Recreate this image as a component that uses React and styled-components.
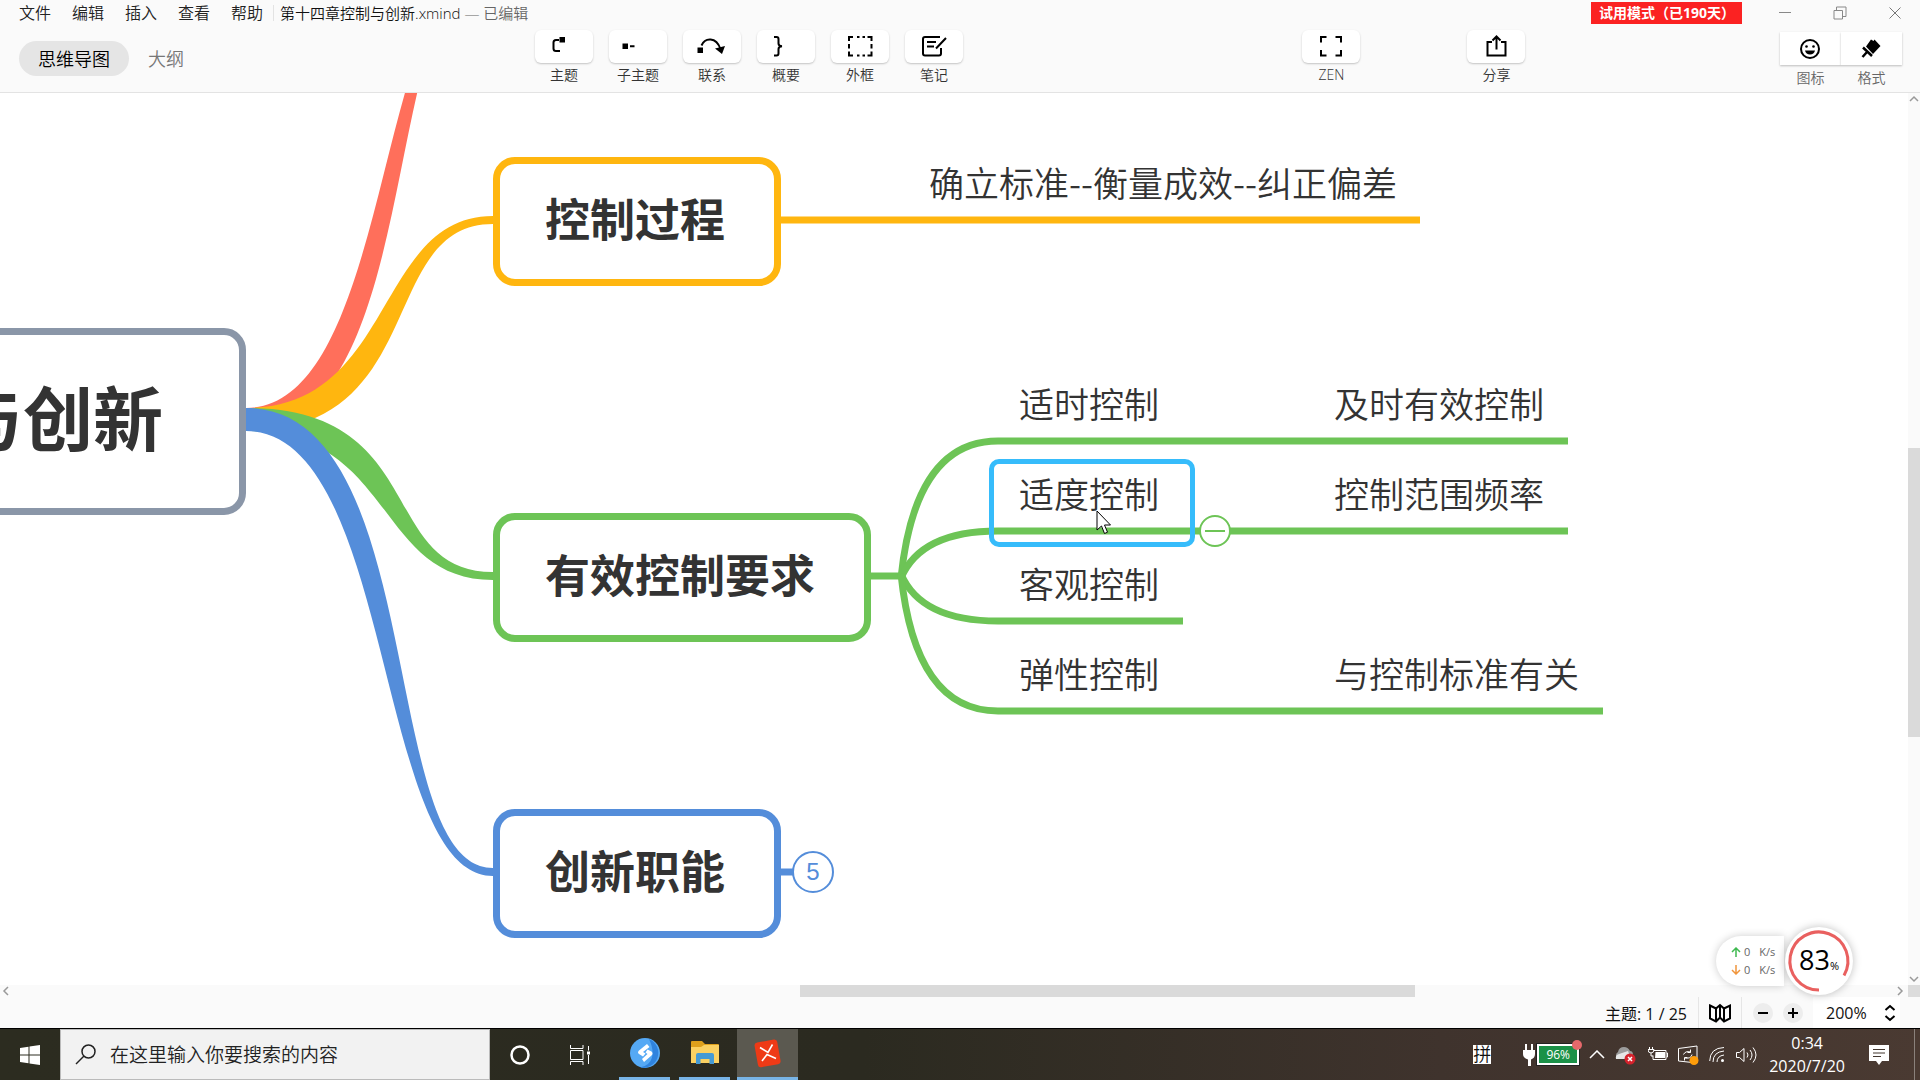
import { useState } from 'react'
import styled, { createGlobalStyle } from 'styled-components'

const GlobalStyle = createGlobalStyle`
  * {
    box-sizing: border-box;
  }

  body {
    margin: 0;
    overflow: hidden;
    color: #333;
    font-family: 'Open Sans', 'Noto Sans CJK SC', sans-serif;
    font-weight: 350;
  }

  button,
  input,
  select {
    margin: 0;
    padding: 0;
    border: 0;
    background: none;
    color: inherit;
    font: inherit;
  }

  svg {
    display: block;
  }
`

const colors = {
  red: '#ff6f5b',
  yellow: '#ffb60f',
  green: '#6dc456',
  blue: '#548dda',
  slate: '#8a96a8',
}

const menus = ['文件', '编辑', '插入', '查看', '帮助']

// TOOLBAR ICONS, DRAWN ON THE 58x33 BUTTON FACE
const icons = {
  topic: (
    <>
      <path d='M24 10h-3q-2.500 0-2.500 2.500v6q0 2.500 2.500 2.500h4' />
      <path d='M24.500 7h5.500v5.500h-5.500z' fill='#000' stroke='none' />
    </>
  ),
  subtopic: (
    <path
      d='M13.500 13.500h5.500v5.500h-5.500zM21 15.300h4.500v1.900h-4.500z'
      fill='#000'
      stroke='none'
    />
  ),
  relation: (
    <>
      <path d='M18.500 15.500C22 7.500 33 6.500 37.500 19' />
      <path
        d='M14.500 17.500h5.500v5.500h-5.500zM32 18.500l10-2.500-3 8z'
        fill='#000'
        stroke='none'
      />
    </>
  ),
  summary: (
    <path d='M17 7h2.500q2 0 2 2v4.500q0 2.500 3.500 2.700-3.500 .300-3.500 2.800v4.500q0 2-2 2H17' />
  ),
  boundary: (
    <path d='M18 11V7h4M36.500 7h4v4M40.500 21.500v4h-4M22 25.500h-4v-4M26 7h2.500M31.500 7H34M26 25.500h2.500M31.500 25.500H34M18 14v4.500M40.500 14v4.500' />
  ),
  note: (
    <>
      <path d='M35 7H20q-2 0-2 2v14.500q0 2 2 2h14q2 0 2-2V18' />
      <path d='M22 12h9M22 16.500h7M31 18.500L41 8' />
    </>
  ),
  zen: (
    <path d='M19 12.500V7h5.500M33.500 7h5.500v5.500M39 20v5.500h-5.500M24.500 25.500h-5.500V20' />
  ),
  share: (
    <>
      <path d='M25 12h-4.500v13.500h18V12H34' />
      <path d='M29.500 19.500V6.500M25.500 10.500l4-4 4 4' />
    </>
  ),
}

const tools = [
  { icon: 'topic', label: '主题' },
  { icon: 'subtopic', label: '子主题' },
  { icon: 'relation', label: '联系' },
  { icon: 'summary', label: '概要' },
  { icon: 'boundary', label: '外框' },
  { icon: 'note', label: '笔记' },
]

// MAP CONTENT, IN CANVAS COORDINATES
const topics = [
  { text: '控制过程', x: 493, y: 64, width: 288, color: colors.yellow },
  { text: '有效控制要求', x: 493, y: 420, width: 378, color: colors.green },
  { text: '创新职能', x: 493, y: 716, width: 288, color: colors.blue },
]

const leaves = [
  { text: '确立标准--衡量成效--纠正偏差', x: 929, y: 65 },
  { text: '适时控制', x: 1019, y: 286 },
  { text: '及时有效控制', x: 1334, y: 286 },
  { text: '适度控制', x: 1019, y: 376 },
  { text: '控制范围频率', x: 1334, y: 376 },
  { text: '客观控制', x: 1019, y: 466 },
  { text: '弹性控制', x: 1019, y: 556 },
  { text: '与控制标准有关', x: 1334, y: 556 },
]

// a branch starts 23 wide at the root and narrows towards its topic
const branch = (top, bottom) =>
  top < 315
    ? `M246 315C395 315 375 ${top} 493 ${top}V${bottom}C377 ${bottom} 430 338 246 338z`
    : `M246 315C430 315 377 ${top} 493 ${top}V${bottom}C375 ${bottom} 395 338 246 338z`

const Tool = ({ icon, label }) => (
  <ToolButton>
    <Face>
      <svg width='58' height='33' fill='none' stroke='#000' strokeWidth='2'>
        {icons[icon]}
      </svg>
    </Face>
    {label}
  </ToolButton>
)

const Header = () => {
  const [view, setView] = useState('map')
  return (
    <Top>
      <TitleBar>
        <Menu>
          {menus.map((name) => (
            <MenuButton key={name}>{name}</MenuButton>
          ))}
        </Menu>
        <FileName>
          第十四章控制与创新.xmind <span>— 已编辑</span>
        </FileName>
        <Trial>试用模式（已190天）</Trial>
        <WindowButtons>
          <button aria-label='最小化'>
            <svg width='14' height='14' stroke='#888'>
              <path d='M1 6.500h12' />
            </svg>
          </button>
          <button aria-label='还原'>
            <svg width='14' height='14' fill='none' stroke='#888'>
              <path d='M1 4.500h8.500v8.500H1zM3.500 4.500V1H13v9.500H9.500' />
            </svg>
          </button>
          <button aria-label='关闭'>
            <svg width='14' height='14' stroke='#777'>
              <path d='M1.500 1.500l11 11M12.500 1.500l-11 11' />
            </svg>
          </button>
        </WindowButtons>
      </TitleBar>
      <Toolbar>
        <Views>
          <ViewButton $active={view === 'map'} onClick={() => setView('map')}>
            思维导图
          </ViewButton>
          <ViewButton
            $active={view === 'outline'}
            onClick={() => setView('outline')}
          >
            大纲
          </ViewButton>
        </Views>
        <Tools>
          {tools.map((tool) => (
            <Tool key={tool.icon} {...tool} />
          ))}
        </Tools>
        <i />
        <Tool icon='zen' label='ZEN' />
        <i />
        <Tool icon='share' label='分享' />
        <i />
        <Panels>
          <PanelButton>
            <span>
              <svg width='22' height='22' fill='none' stroke='#000' strokeWidth='2'>
                <circle cx='11' cy='11' r='9' />
                <path d='M6 12.500h10q-1 4-5 4t-5-4z' fill='#000' stroke='none' />
                <circle cx='7.500' cy='8.500' r='1.300' fill='#000' stroke='none' />
                <circle cx='14.500' cy='8.500' r='1.300' fill='#000' stroke='none' />
              </svg>
            </span>
            图标
          </PanelButton>
          <PanelButton>
            <span>
              <svg width='22' height='22' stroke='#000' strokeWidth='2.500'>
                <path
                  d='M11 1.500l2.500 1.500 1-1.500 6 6.500-7.500 8L6 8.500z'
                  stroke='none'
                />
                <path d='M3 9.500l9 8.500M7 14l-4.500 5' fill='none' />
              </svg>
            </span>
            格式
          </PanelButton>
        </Panels>
      </Toolbar>
    </Top>
  )
}

const MindMap = () => (
  <Canvas>
    <Links>
      <path d={branch(-132, -125)} fill={colors.red} />
      <path d={branch(123, 131)} fill={colors.yellow} />
      <path d={branch(479, 487)} fill={colors.green} />
      <path d={branch(775, 783)} fill={colors.blue} />
      <path d='M781 127H1420' stroke={colors.yellow} strokeWidth='7' />
      <path d='M781 779h14' stroke={colors.blue} strokeWidth='7' />
      <g fill='none' stroke={colors.green} strokeWidth='7'>
        <path d='M871 483h31' />
        <path d='M901 485Q915 348 998 348H1568' />
        <path d='M901 485Q921 438 998 438H1568' />
        <path d='M901 481Q921 528 998 528H1183' />
        <path d='M901 481Q915 618 998 618H1603' />
      </g>
    </Links>
    <Root>与创新</Root>
    {topics.map((topic) => (
      <Topic
        key={topic.text}
        $x={topic.x}
        $y={topic.y}
        $width={topic.width}
        $color={topic.color}
      >
        {topic.text}
      </Topic>
    ))}
    {leaves.map((leaf) => (
      <Leaf key={leaf.text} $x={leaf.x} $y={leaf.y}>
        {leaf.text}
      </Leaf>
    ))}
    <Selection />
    <Fold aria-label='折叠' />
    <Count>5</Count>
    <Pointer width='16' height='25' fill='#fff' stroke='#000'>
      <path d='M1 1v19l4.500-4 3 7.500 3-1.300-3-7.200h6z' />
    </Pointer>
  </Canvas>
)

// floating memory and network meter
const Monitor = () => (
  <>
    <NetSpeed>
      <p>
        <svg width='10' height='10' fill='none' stroke='#3fb950' strokeWidth='1.500'>
          <path d='M5 10V1.500M1 5l4-4 4 4' />
        </svg>
        0<span>K/s</span>
      </p>
      <p>
        <svg width='10' height='10' fill='none' stroke='#f0953c' strokeWidth='1.500'>
          <path d='M5 0v8.500M1 5l4 4 4-4' />
        </svg>
        0<span>K/s</span>
      </p>
    </NetSpeed>
    <Gauge>
      <svg width='68' height='68' fill='none' stroke='#e9605f' strokeWidth='3'>
        <path d='M34 63A29 29 0 1 1 59 48.500' />
      </svg>
      83<small>%</small>
    </Gauge>
  </>
)

const Workspace = () => (
  <Work>
    <MindMap />
    <VerticalScroll>
      <svg width='12' height='12' fill='none' stroke='#999' strokeWidth='1.500'>
        <path d='M2 8l4-4 4 4' />
      </svg>
      <Thumb $before={343} $size={289} $after={236} />
      <svg width='12' height='12' fill='none' stroke='#999' strokeWidth='1.500'>
        <path d='M2 4l4 4 4-4' />
      </svg>
    </VerticalScroll>
    <HorizontalScroll>
      <svg width='12' height='12' fill='none' stroke='#999' strokeWidth='1.500'>
        <path d='M8 2L4 6l4 4' />
      </svg>
      <Thumb $before={788} $size={615} $after={481} />
      <svg width='12' height='12' fill='none' stroke='#999' strokeWidth='1.500'>
        <path d='M2 2l4 4-4 4' />
      </svg>
    </HorizontalScroll>
    <Corner />
    <Monitor />
  </Work>
)

const StatusBar = () => (
  <Status>
    <Total>主题: 1 / 25</Total>
    <MapButton aria-label='导航图'>
      <svg width='22' height='20' fill='none' stroke='#000' strokeWidth='2'>
        <path d='M1 2.500l6 3 4-3.500 4 3.500 6-3v13l-6 3-4-4-4 4-6-3zM7 5.500v13M11 2v12.500M15 5.500v13' />
      </svg>
    </MapButton>
    <Zoom>
      <button aria-label='缩小'>
        <svg width='20' height='20' stroke='#000' strokeWidth='2'>
          <path d='M5 10h10' />
        </svg>
      </button>
      <button aria-label='放大'>
        <svg width='20' height='20' stroke='#000' strokeWidth='2'>
          <path d='M5 10h10M10 5v10' />
        </svg>
      </button>
    </Zoom>
    <Scale>
      <select aria-label='缩放比例' defaultValue='200%'>
        <option>100%</option>
        <option>200%</option>
      </select>
      <svg width='12' height='18' fill='none' stroke='#000' strokeWidth='2'>
        <path d='M1.500 6L6 2l4.500 4M1.500 12L6 16l4.500-4' />
      </svg>
    </Scale>
  </Status>
)

const Taskbar = () => (
  <Bar>
    <Start aria-label='开始'>
      <svg width='20' height='20' fill='#fff'>
        <path d='M0 3l8.500-1.200V9.500H0zM9.500 1.600L20 0v9.500H9.500zM0 10.500h8.500v7.700L0 17zM9.500 10.500H20V20L9.500 18.400z' />
      </svg>
    </Start>
    <Search>
      <svg width='21' height='21' fill='none' stroke='#222' strokeWidth='1.500'>
        <circle cx='13.500' cy='7.500' r='6.500' />
        <path d='M9 12L1 20' />
      </svg>
      <input aria-label='搜索' placeholder='在这里输入你要搜索的内容' />
    </Search>
    <TaskButton aria-label='Cortana'>
      <svg width='20' height='20' fill='none' stroke='#fff' strokeWidth='2.500'>
        <circle cx='10' cy='10' r='8.500' />
      </svg>
    </TaskButton>
    <TaskButton aria-label='任务视图'>
      <svg width='20' height='20' fill='none' stroke='#fff'>
        <path d='M.500 0v3.500h12.500V0M.500 5.500h12.500v9H.500zM.500 20v-3.500h12.500V20M18.500 1v4.500M18.500 10v9' />
        <path d='M17 6.500h3v3h-3z' fill='#fff' stroke='none' />
      </svg>
    </TaskButton>
    <TaskButton $open aria-label='浏览器'>
      <svg width='30' height='30'>
        <circle cx='15' cy='15' r='15' fill='#55a9f5' />
        <path d='M19 1a15 15 0 0 1-9 28.500q10-2 12-10T19 1z' fill='#2f83de' />
        <path
          d='M17 6l-8 6.500q-2 2 0 3.500l4 2.500 2.500-3-2.500-1.500L19.500 9zM14 24l7.500-6.500q2-2 0-4l-4-2-2 3 2 1.500-5.500 5z'
          fill='#fff'
        />
      </svg>
    </TaskButton>
    <TaskButton $open aria-label='文件资源管理器'>
      <svg width='28' height='24'>
        <path d='M0 1q0-1 1-1h10l3 3h13q1 0 1 1v18H0z' fill='#dea01c' />
        <path d='M0 6h10l3-2h15v18H0z' fill='#fbd162' />
        <path d='M5 23V14q0-2 2-2h14q2 0 2 2v9h-4.500v-5h-9v5z' fill='#459ad4' />
      </svg>
    </TaskButton>
    <TaskButton $open $active aria-label='XMind'>
      <svg width='28' height='30'>
        <rect
          x='2'
          y='3'
          width='23'
          height='25'
          rx='3'
          fill='#ee3a16'
          transform='rotate(-10 13 15)'
        />
        <path
          d='M6 9.500l8 5 4.500-8M8 23l5-6.500 9 4'
          fill='none'
          stroke='#fff'
          strokeWidth='1.600'
        />
      </svg>
    </TaskButton>
    <Tray>
      <Ime>拼</Ime>
      <Battery>
        <svg width='12' height='22' fill='#fff'>
          <path d='M2 0h2v6h4V0h2v6h2v4q0 4-4 5.500V22H5v-6.500Q0 14 0 10V6h2z' />
        </svg>
        <span>96%</span>
      </Battery>
      <svg width='16' height='9' fill='none' stroke='#fff' strokeWidth='1.500'>
        <path d='M1 8l7-7 7 7' />
      </svg>
      <svg width='23' height='20'>
        <path d='M3 14a4 4 0 0 1 0-7q1-5 6-5 4 0 6 4 3 0 3 4v4z' fill='#9c9c9c' />
        <path d='M1 14q-1-4 3-5l9-3 3 8z' fill='#e6e6e6' />
        <circle cx='15' cy='14' r='5.500' fill='#d4222c' />
        <path d='M13 12l4 4M17 12l-4 4' stroke='#fff' strokeWidth='1.500' />
      </svg>
      <svg width='20' height='20' fill='none' stroke='#fff'>
        <path d='M6 5.500h12v9H5v-4M18.500 8h1v4h-1' />
        <path d='M7.500 7h9.500v6H7z' fill='#fff' stroke='none' />
        <path d='M1.500 2v2.500M4.500 2v2.500M0 4.500h6q0 3.500-3 3.500t-3-3.500M3 8v3h2' />
      </svg>
      <svg width='21' height='20' fill='none' stroke='#fff'>
        <path d='M.500 3.500L19 1v17L.500 16z' />
        <path d='M5.500 9.500q2-4 7-2.500M12.500 4.500V7.500H9.500M14 9.500q-1 4.500-7 3.500M6.500 15.500v-3h3' />
        <circle cx='16' cy='15.500' r='4.500' fill='#ff9d0a' stroke='none' />
      </svg>
      <svg width='17' height='17' fill='none' stroke='#fff'>
        <path d='M.700 15Q1 2 15 1.500M4 16Q4 6 15 5M8 16Q8 10 15 9' />
        <circle cx='13.500' cy='14.500' r='1.500' fill='#fff' stroke='none' />
      </svg>
      <svg width='21' height='18' fill='none' stroke='#fff'>
        <path d='M.500 6.500h3L8 2.500v13L3.500 11.500h-3zM11 6.500q2 2.500 0 5M14 4q4 5 0 10M17 1.500q6 7.500 0 15' />
      </svg>
      <Clock>
        0:34
        <br />
        2020/7/20
      </Clock>
      <svg width='20' height='20'>
        <path d='M0 0h20v16h-7l-3 4-3-4H0z' fill='#fff' />
        <path d='M4 4.500h12M4 8h12M4 11.500h8' stroke='#43372f' />
      </svg>
    </Tray>
  </Bar>
)

const App = () => (
  <Page>
    <GlobalStyle />
    <Header />
    <Workspace />
    <StatusBar />
    <Taskbar />
  </Page>
)

const Page = styled.div`
  display: flex;
  flex-direction: column;
  height: 100vh;
  background: #fff;
`

const Top = styled.header`
  height: 93px;
  background: #fafafa;
  border-bottom: 1px solid #e3e3e3;
`

const TitleBar = styled.div`
  display: flex;
  align-items: center;
  height: 26px;
  padding: 0 18px 0 19px;
`

const Menu = styled.nav`
  display: flex;
  gap: 21px;
  padding-right: 10px;
  border-right: 1px solid #e3e3e3;
`

const MenuButton = styled.button`
  color: #222;
  font-size: 16px;
  line-height: 16px;
`

const FileName = styled.div`
  padding-left: 6px;
  color: #111;
  font-size: 15px;
  line-height: 22px;
  span {
    color: #666;
  }
`

const Trial = styled.strong`
  margin-left: auto;
  width: 151px;
  padding-left: 8px;
  background: #fb2222;
  color: #fff;
  font-size: 14px;
  line-height: 22px;
  white-space: nowrap;
`

const WindowButtons = styled.div`
  display: flex;
  gap: 41px;
  margin-left: 36px;
`

const Toolbar = styled.div`
  display: grid;
  grid-template-columns: 516px auto 4fr auto 107px auto 3fr auto;
  padding: 4px 18px 0 19px;
`

const Views = styled.div`
  display: flex;
  align-items: flex-start;
  padding-top: 11px;
`

const ViewButton = styled.button`
  height: 35px;
  padding: 0 19px;
  border-radius: 18px;
  background: ${(props) => (props.$active ? '#e5e5e5' : 'none')};
  color: ${(props) => (props.$active ? '#000' : '#777')};
  font-size: 18px;
  line-height: 32px;
`

const Tools = styled.div`
  display: flex;
  gap: 16px;
`

const ToolButton = styled.button`
  display: flex;
  flex-direction: column;
  align-items: center;
  gap: 2px;
  width: 58px;
  color: #333;
  font-size: 14px;
  line-height: 20px;
`

const Face = styled.span`
  height: 33px;
  border-radius: 6px;
  background: #fff;
  box-shadow: 0 1px 2px rgba(0, 0, 0, 0.22);
`

const Panels = styled.div`
  display: flex;
  padding-top: 2px;
`

const PanelButton = styled.button`
  display: flex;
  flex-direction: column;
  gap: 3px;
  width: 61px;
  color: #666;
  font-size: 14px;
  line-height: 20px;
  span {
    display: grid;
    place-items: center;
    width: 100%;
    height: 33px;
    background: #fff;
    box-shadow: 0 1px 2px rgba(0, 0, 0, 0.25);
  }
`

const Work = styled.main`
  position: relative;
  display: grid;
  flex: 1;
  grid-template: minmax(0, 1fr) 12px / minmax(0, 1fr) 12px;
  min-height: 0;
`

const Canvas = styled.section`
  position: relative;
  overflow: hidden;
  background: #fff;
`

const Links = styled.svg`
  position: absolute;
  width: 100%;
  height: 100%;
`

const Root = styled.div`
  position: absolute;
  top: 235px;
  left: -100px;
  display: flex;
  justify-content: flex-end;
  width: 346px;
  height: 187px;
  padding-right: 76px;
  border: 7px solid ${colors.slate};
  border-radius: 22px;
  background: #fff;
  font-size: 70px;
  font-weight: 700;
  line-height: 168px;
  white-space: nowrap;
`

const Topic = styled.div`
  position: absolute;
  top: ${(props) => props.$y}px;
  left: ${(props) => props.$x}px;
  width: ${(props) => props.$width}px;
  height: 129px;
  padding-right: 4px;
  border: 7px solid ${(props) => props.$color};
  border-radius: 22px;
  background: #fff;
  font-size: 45px;
  font-weight: 700;
  line-height: 112px;
  text-align: center;
  white-space: nowrap;
`

const Leaf = styled.div`
  position: absolute;
  top: ${(props) => props.$y}px;
  left: ${(props) => props.$x}px;
  font-family: 'Noto Sans CJK SC', sans-serif;
  font-size: 35px;
  line-height: 48px;
  white-space: nowrap;
`

const Selection = styled.div`
  position: absolute;
  top: 366px;
  left: 989px;
  width: 206px;
  height: 88px;
  border: 5px solid #36bcfb;
  border-radius: 10px;
`

const Fold = styled.button`
  position: absolute;
  top: 422px;
  left: 1199px;
  display: grid;
  place-items: center;
  width: 32px;
  height: 32px;
  border: 2px solid ${colors.green};
  border-radius: 50%;
  background: #fff;
  &::before {
    content: '';
    width: 20px;
    height: 2px;
    background: ${colors.green};
  }
`

const Count = styled.button`
  position: absolute;
  top: 758px;
  left: 792px;
  width: 42px;
  height: 42px;
  border: 2px solid ${colors.blue};
  border-radius: 50%;
  background: #fff;
  color: ${colors.blue};
  font-family: 'Liberation Sans', sans-serif;
  font-size: 24px;
  line-height: 38px;
`

const Pointer = styled.svg`
  position: absolute;
  top: 417px;
  left: 1096px;
`

const NetSpeed = styled.div`
  position: absolute;
  right: 136px;
  bottom: 11px;
  display: flex;
  flex-direction: column;
  justify-content: center;
  width: 68px;
  height: 50px;
  padding-left: 15px;
  border-radius: 25px 0 0 25px;
  background: #fff;
  box-shadow: 0 0 8px rgba(0, 0, 0, 0.2);
  color: #666;
  font-size: 11px;
  font-weight: 400;
  line-height: 18px;
  p {
    display: flex;
    align-items: center;
    gap: 3px;
    margin: 0;
  }
  span {
    margin-left: 6px;
  }
`

const Gauge = styled.div`
  position: absolute;
  right: 67px;
  bottom: 2px;
  display: flex;
  align-items: baseline;
  justify-content: center;
  width: 68px;
  height: 68px;
  border-radius: 50%;
  background: #fff;
  box-shadow: 0 0 8px rgba(0, 0, 0, 0.25);
  color: #000;
  font-size: 27px;
  font-weight: 400;
  line-height: 66px;
  svg {
    position: absolute;
    top: 0;
    left: 0;
  }
  small {
    font-size: 11px;
  }
`

const VerticalScroll = styled.div`
  display: flex;
  flex-direction: column;
  background: #fafafa;
`

const HorizontalScroll = styled.div`
  display: flex;
  background: #fafafa;
`

const Thumb = styled.div`
  display: flex;
  flex: 1;
  flex-direction: inherit;
  &::before {
    content: '';
    flex: ${(props) => props.$before};
  }
  &::after {
    content: '';
    flex: ${(props) => props.$size};
    background: #dadada;
  }
  ${VerticalScroll} & {
    padding-bottom: ${(props) => props.$after}px;
  }
  ${HorizontalScroll} & {
    padding-right: ${(props) => props.$after}px;
  }
`

const Corner = styled.div`
  background: #dcdcdc;
`

const Status = styled.footer`
  display: flex;
  align-items: stretch;
  justify-content: flex-end;
  height: 32px;
  padding-right: 20px;
  border-bottom: 1px solid #000;
  background: #fafafa;
  color: #111;
  font-size: 16px;
  font-weight: 400;
  line-height: 34px;
`

const Total = styled.div`
  padding-right: 11px;
`

const MapButton = styled.button`
  display: grid;
  place-items: center;
  width: 44px;
  border: 1px solid #e6e6e6;
  border-width: 0 1px;
`

const Zoom = styled.div`
  display: flex;
  align-items: center;
  gap: 10px;
  padding: 0 10px 0 11px;
  button {
    border-radius: 50%;
    background: #ededed;
  }
`

const Scale = styled.label`
  display: flex;
  align-items: center;
  justify-content: space-between;
  width: 87px;
  padding: 0 4px 0 13px;
  background: #fff;
  select {
    width: 50px;
    appearance: none;
  }
`

const Bar = styled.footer`
  display: flex;
  height: 51px;
  background: linear-gradient(90deg, #2c2c20, #2b2a20 45%, #3f332d 75%, #4a3a32);
  color: #fff;
`

const Start = styled.button`
  display: grid;
  place-items: center;
  width: 60px;
`

const Search = styled.label`
  display: flex;
  align-items: center;
  gap: 14px;
  width: 430px;
  padding-left: 14px;
  border: 1px solid #bbb;
  background: #f2f2f2;
  input {
    flex: 1;
    height: 40px;
    font-size: 19px;
    outline: 0;
  }
  input::placeholder {
    color: #222;
    opacity: 1;
  }
`

const TaskButton = styled.button`
  display: grid;
  place-items: center;
  width: ${(props) => (props.$active ? 61 : props.$open ? 51 : 60)}px;
  margin-left: ${(props) => (props.$active ? 7 : props.$open ? 9 : 0)}px;
  background: ${(props) => (props.$active ? '#5b5950' : 'none')};
  border-bottom: ${(props) => (props.$open ? '3px solid #78b4e6' : '0')};
`

const Tray = styled.div`
  display: flex;
  align-items: center;
  gap: 10px;
  margin: 0 5px 0 auto;
  padding-right: 25px;
  border-right: 1px solid #8a817b;
`

const Ime = styled.span`
  margin-right: 22px;
  background: #fff;
  color: #111;
  font-size: 18px;
  line-height: 19px;
`

const Battery = styled.div`
  position: relative;
  display: flex;
  align-items: center;
  gap: 2px;
  span {
    width: 42px;
    border: 2px solid #fff;
    outline: 1px solid #222;
    background: #1b9148;
    font-size: 12px;
    font-weight: 400;
    line-height: 17px;
    text-align: center;
  }
  &::after {
    content: '';
    position: absolute;
    top: -4px;
    right: -3px;
    width: 10px;
    height: 10px;
    border-radius: 50%;
    background: #e5696b;
  }
`

const Clock = styled.time`
  margin: 0 14px 0 2px;
  font-size: 16px;
  font-weight: 400;
  line-height: 23px;
  text-align: center;
`

export default App
